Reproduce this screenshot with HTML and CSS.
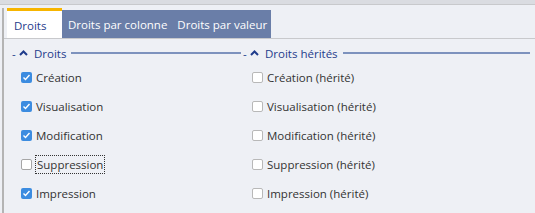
FILE: index.html
```html
<!DOCTYPE html>
<html lang="fr">
<head>
  <meta charset="UTF-8">
  <title>Droits</title>
  <link rel="stylesheet" href="styles.css">
</head>
<body>
  <div class="top-strip"></div>
  <div class="frame">
    <div class="tabs">
      <div class="tab active">Droits</div>
      <div class="tab-group">
        <div class="tab">Droits par colonne</div>
        <div class="tab">Droits par valeur</div>
      </div>
    </div>

    <div class="groups">
      <div class="group">
        <div class="group-head">
          <span class="dash">-</span>
          <svg class="caret" width="9" height="6" viewBox="0 0 9 6"><path d="M1 5 L4.5 1.5 L8 5" fill="none" stroke="#1f3c8c" stroke-width="2"/></svg>
          <span class="title">Droits</span>
          <span class="rule"></span>
        </div>
        <label class="row"><span class="box checked"></span><span>Création</span></label>
        <label class="row"><span class="box checked"></span><span>Visualisation</span></label>
        <label class="row"><span class="box checked"></span><span>Modification</span></label>
        <label class="row"><span class="box"></span><span class="focus">Suppression</span></label>
        <label class="row"><span class="box checked"></span><span>Impression</span></label>
      </div>

      <div class="group">
        <div class="group-head">
          <span class="dash">-</span>
          <svg class="caret" width="9" height="6" viewBox="0 0 9 6"><path d="M1 5 L4.5 1.5 L8 5" fill="none" stroke="#1f3c8c" stroke-width="2"/></svg>
          <span class="title">Droits hérités</span>
          <span class="rule"></span>
        </div>
        <label class="row"><span class="box light"></span><span>Création (hérité)</span></label>
        <label class="row"><span class="box light"></span><span>Visualisation (hérité)</span></label>
        <label class="row"><span class="box light"></span><span>Modification (hérité)</span></label>
        <label class="row"><span class="box light"></span><span>Suppression (hérité)</span></label>
        <label class="row"><span class="box light"></span><span>Impression (hérité)</span></label>
      </div>
    </div>
  </div>
</body>
</html>
```

FILE: styles.css
```css
body {
  margin: 0;
  background-color: #eef0f5;
  font-family: 'Open Sans', 'DejaVu Sans', sans-serif;
  font-size: 11.5px;
  color: #333;
  overflow: hidden;
}

.top-strip {
  height: 4px;
  background-color: #dadce1;
  border-bottom: 1px solid #c8c9cc;
}

.frame {
  margin-left: 2px;
  border-left: 2px solid #b4b4b4;
  height: 208px;
}

.tabs {
  display: flex;
  align-items: flex-end;
  margin-top: 3px;
  padding-left: 3px;
  border-bottom: 1px solid #c8c9cc;
}

.tab {
  padding: 0 6px;
  line-height: 27px;
}

.tab.active {
  width: 42px;
  padding-left: 7px;
  line-height: 29px;
  height: 27px;
  border-top: 3px solid #f7b500;
  background-color: #fff;
  color: #1f3c8c;
}

.tab-group {
  display: flex;
  background-color: #6a7ea8;
  color: #fff;
  height: 28px;
}

.tab-group .tab {
  line-height: 29px;
  padding: 0 4px 0 6px;
}

.groups {
  display: grid;
  grid-template-columns: 231px 289px;
  padding-left: 8px;
  padding-top: 6px;
}

.group-head {
  display: flex;
  align-items: center;
  height: 16px;
  color: #1f3c8c;
  margin-bottom: 2px;
}

.dash {
  width: 5px;
  margin-right: 2px;
}

.caret {
  margin-right: 6px;
}

.rule {
  flex: 1;
  height: 2px;
  margin: 0 2px 0 5px;
  background-color: #7d92bd;
}

.row {
  display: flex;
  align-items: center;
  height: 29px;
  padding-left: 9px;
}

.box {
  width: 11px;
  height: 11px;
  box-sizing: border-box;
  border: 1px solid #a6a6a6;
  border-radius: 2px;
  background-color: #fff;
  margin-right: 4px;
}

.box.light {
  border-color: #b8b8b8;
}

.box.checked {
  border: none;
  background-color: #3c8ce0;
  background-image: url("data:image/svg+xml;utf8,<svg xmlns='http://www.w3.org/2000/svg' width='11' height='11'><path d='M2.5 5.5 L4.5 7.5 L8.5 3' fill='none' stroke='white' stroke-width='1.4'/></svg>");
}

.focus {
  outline: 1px dotted #333;
  padding: 1px 1px;
}
```
